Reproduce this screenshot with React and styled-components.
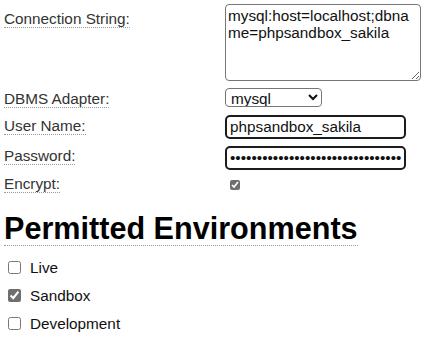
import React from 'react'
import styled, { createGlobalStyle } from 'styled-components'

const Global = createGlobalStyle`
  body {
    margin: 0;
    padding: 4px;
    background: #fff;
    font-family: "Liberation Sans", Arial, sans-serif;
    font-size: 15.3px;
    color: #333;
  }
`

const Form = styled.div`
  display: grid;
  grid-template-columns: 221px 1fr;
  row-gap: 7px;
  align-items: start;
`

const Label = styled.span`
  justify-self: start;
  margin-top: ${p => p.top || 0}px;
  border-bottom: 1px dotted #999;
  line-height: 17px;
  color: #333;
`

const TextArea = styled.textarea`
  width: 196px;
  height: 77px;
  box-sizing: border-box;
  border: 1px solid #767676;
  border-radius: 4px;
  padding: 2px 2px;
  font-family: "Liberation Sans", Arial, sans-serif;
  font-size: 15.3px;
  line-height: 17px;
  color: #111;
  resize: both;
`

const Select = styled.select`
  width: 97px;
  height: 19px;
  box-sizing: border-box;
  border: 1px solid #767676;
  border-radius: 4px;
  font-family: "Liberation Sans", Arial, sans-serif;
  font-size: 15.3px;
  color: #111;
  padding: 0 0 0 1px;
  background: #fff;
`

const TextInput = styled.input`
  width: 181px;
  height: 24px;
  box-sizing: border-box;
  border: 2px solid #1c1c1c;
  border-radius: 5px;
  padding: 0 3px;
  font-family: "Liberation Sans", Arial, sans-serif;
  font-size: 15.3px;
  color: #111;
`

const Check = styled.input`
  margin: ${p => p.m || '0'};
  width: ${p => p.size}px;
  height: ${p => p.size}px;
  accent-color: #6f6f6f;
`

const Heading = styled.h1`
  display: inline-block;
  margin: 18px 0 12px;
  font-size: 30.6px;
  line-height: 34px;
  font-weight: bold;
  color: #000;
  border-bottom: 1px dotted #999;
`

const EnvList = styled.div`
  display: flex;
  flex-direction: column;
  gap: 9px;
  padding-left: 4px;
`

const EnvRow = styled.label`
  display: flex;
  align-items: center;
  gap: 9px;
  color: #111;
  line-height: 19px;
`

const envs = [
  { name: 'Live', on: false },
  { name: 'Sandbox', on: true },
  { name: 'Development', on: false },
]

export default function App() {
  return (
    <>
      <Global />
      <Form>
        <Label top={6}>Connection String:</Label>
        <TextArea defaultValue="mysql:host=localhost;dbname=phpsandbox_sakila" />
        <Label top={2}>DBMS Adapter:</Label>
        <Select defaultValue="mysql">
          <option value="mysql">mysql</option>
        </Select>
        <Label top={2}>User Name:</Label>
        <TextInput type="text" defaultValue="phpsandbox_sakila" />
        <Label top={1}>Password:</Label>
        <TextInput type="password" defaultValue="phpsandbox_sakila_password_secret" />
        <Label top={-2}>Encrypt:</Label>
        <Check type="checkbox" size={10} m="3px 0 0 5px" defaultChecked />
      </Form>
      <Heading>Permitted Environments</Heading>
      <EnvList>
        {envs.map(e => (
          <EnvRow key={e.name}>
            <Check type="checkbox" size={13} defaultChecked={e.on} />
            {e.name}
          </EnvRow>
        ))}
      </EnvList>
    </>
  )
}
